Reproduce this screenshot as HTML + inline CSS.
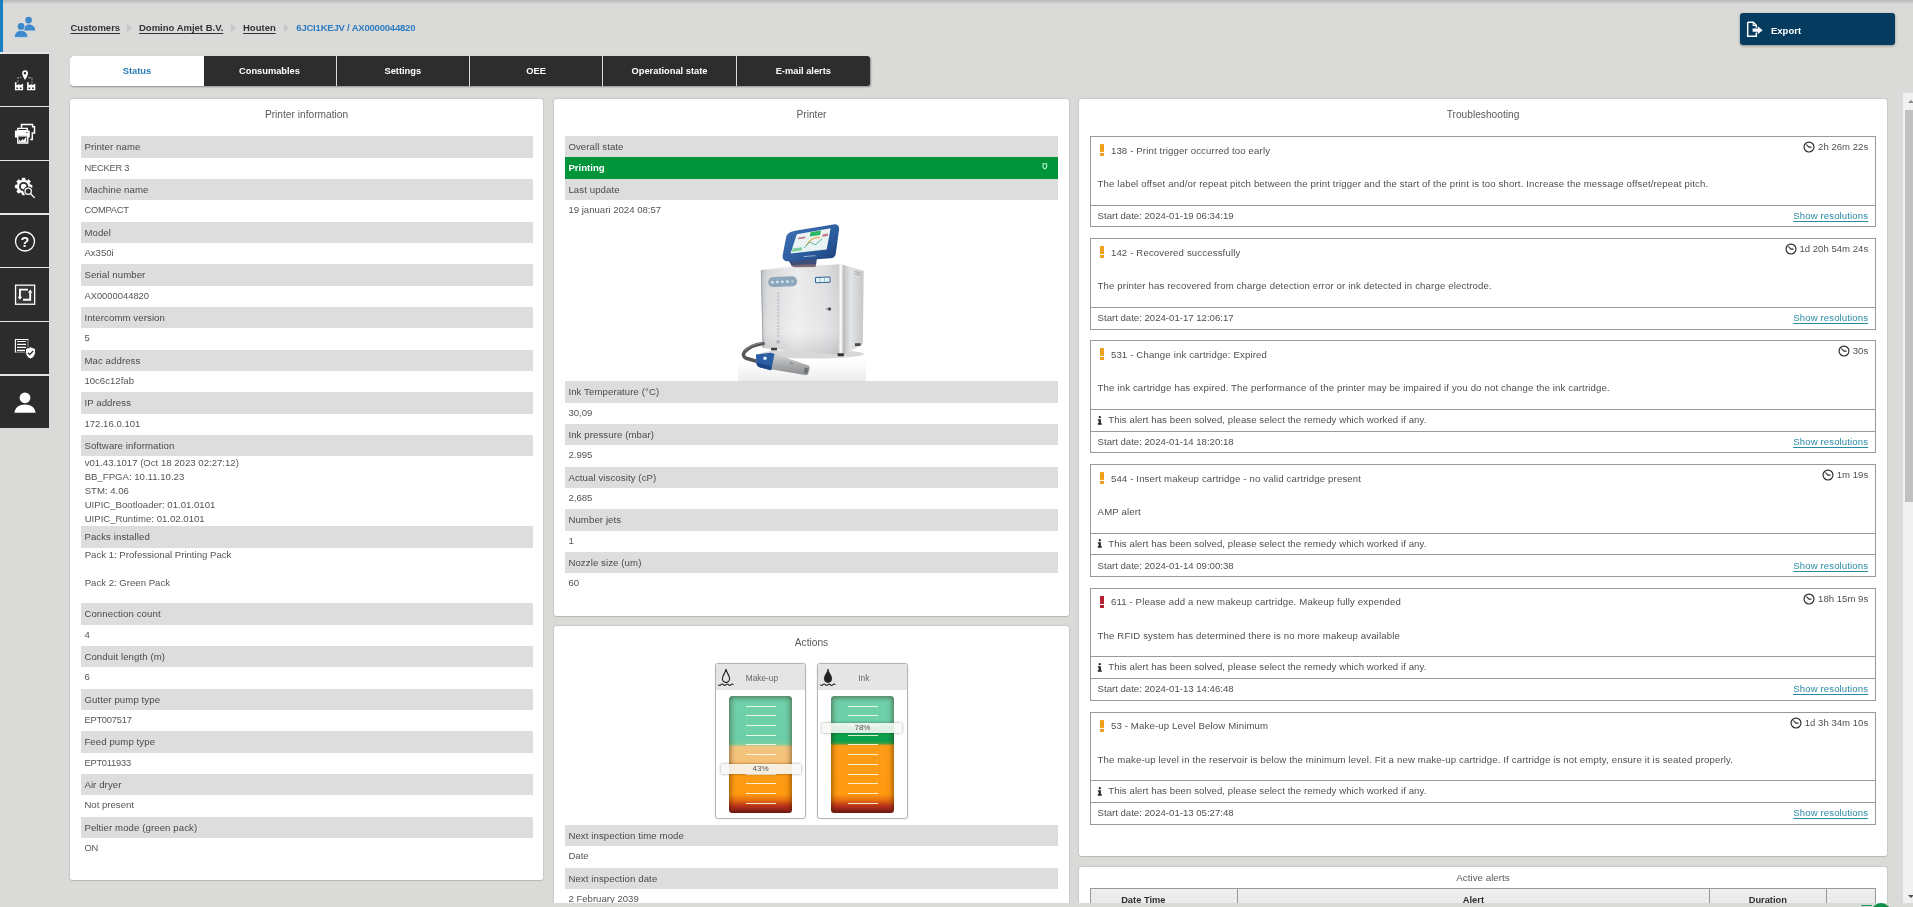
<!DOCTYPE html>
<html lang="en">
<head>
<meta charset="utf-8">
<title>Printer status</title>
<style>
*{box-sizing:border-box;margin:0;padding:0}
html,body{width:1913px;height:907px;overflow:hidden}
body{position:relative;background:#dadad8;font-family:"Liberation Sans",sans-serif;font-size:10px;color:#505050}
.abs{position:absolute}
#wrap{position:absolute;left:0;top:0;width:1913px;height:907px;overflow:hidden;will-change:transform}
#topstrip{left:0;top:0;width:1913px;height:4px;background:linear-gradient(#bcbcbc 0,#c2c2c2 40%,#dadad8 100%)}
/* sidebar */
#side{left:0;top:0;width:49px;height:428px;will-change:transform}
.sitem{position:absolute;left:0;width:49px;height:52.3px;background:#2c2c2c}
.sitem svg{position:absolute;left:0;top:0}
.sitem.act{background:transparent}
.sitem.act:before{content:"";position:absolute;left:0;top:0;width:3px;height:52px;background:#1b7fc4}
.ssep{position:absolute;left:0;width:49px;height:1.4px;background:#e6e6e6}
/* breadcrumb */
.bc{top:21px;height:14px;line-height:14px;font-weight:bold;font-size:9.5px;color:#333;white-space:nowrap}
.bc u{text-decoration:underline;text-underline-offset:1.5px}
.bc.cur{color:#2b7cc0}
.bcarr{top:24px;width:0;height:0;border-left:5px solid #c6c6c6;border-top:4px solid transparent;border-bottom:4px solid transparent}
/* export */
#export{left:1740px;top:13px;width:155px;height:32px;border-radius:3px;background:#043b5e;box-shadow:0 1px 3px rgba(0,0,0,.35);color:#fff;font-weight:bold;font-size:9.5px}
#export span{position:absolute;left:31px;top:10.8px;line-height:14px}
/* tabs */
#tabs{left:70px;top:56px;width:800px;height:30px;border-radius:3px;background:#2d2d2d;box-shadow:1px 1px 2px rgba(0,0,0,.35)}
.tab{position:absolute;top:0;height:30px;width:133.33px;line-height:30px;text-align:center;color:#fff;font-weight:bold;font-size:9.3px;border-right:1px solid #dadad8;white-space:nowrap}
.tab.on{background:#fff;color:#2b7cb8;border-radius:3px 0 0 3px;border-right:0;width:134px}
.tab.last{border-right:0}
/* panels */
.panel{position:absolute;background:#fff;border-radius:2.5px;box-shadow:0 0 2px rgba(0,0,0,.25),0 1px 1px rgba(0,0,0,.1)}
.ptitle{position:absolute;left:0;right:0;text-align:center;font-size:10.2px;color:#5a5a5a;line-height:14px;white-space:nowrap}
.row{position:absolute;height:21.33px;line-height:21.33px;padding-left:3.4px;white-space:nowrap;overflow:hidden}
.lab{background:#dddddd;color:#4a4a4a;font-size:9.6px;letter-spacing:.1px}
.val{color:#555;font-size:9.6px;line-height:20.2px}
.cap{font-size:9.3px;letter-spacing:-.2px}
.ml{position:absolute;line-height:14px;font-size:9.6px;padding-left:3.7px;white-space:nowrap;color:#555}

.card{position:absolute;top:37.3px;width:90.6px;height:156.2px;border:1px solid #b4b4b4;border-radius:3px;background:#fff;box-shadow:0 0 2px rgba(0,0,0,.12)}
.chead{position:absolute;left:0;top:0;right:0;height:26.1px;background:#e5e5e5;border-radius:2px 2px 0 0}
.chead span{position:absolute;left:0;right:0;top:6.5px;line-height:14px;text-align:center;font-size:8.3px;color:#666}
.tank{position:absolute;left:12.8px;top:31.7px;width:63px;height:117px;border-radius:3.5px;overflow:hidden;box-shadow:inset 0 0 5px rgba(0,0,0,.28)}
.tank i{position:absolute;left:17px;width:30px;height:1px;background:rgba(255,255,235,.85)}
.tshade{position:absolute;left:0;top:0;width:63px;height:117px;border-radius:3.5px;box-shadow:inset 0 0 6px 1px rgba(70,35,0,.42)}
.mark{position:absolute;left:4.3px;width:80px;height:10px;background:rgba(247,247,245,.9);box-shadow:0 0 3px rgba(0,0,0,.38);text-align:center;font-size:8px;line-height:10.5px;color:#555;border-radius:1px}

.abox{position:absolute;left:11.4px;width:785.4px;border:1px solid #999;background:#fff}
.abox .t{position:absolute;white-space:nowrap;line-height:14px;color:#505050;font-size:9.6px;letter-spacing:.15px}
.abox .dv{position:absolute;left:0;right:0;height:1px;background:#999}
.abox a{color:#2a8aa6;text-decoration:underline;text-underline-offset:1.5px}
.ex{position:absolute;left:8.6px;top:6.7px;width:4px;height:11.8px}
.ex:before{content:"";position:absolute;left:0;top:0;width:4px;height:8.3px}
.ex:after{content:"";position:absolute;left:.2px;bottom:0;width:3.6px;height:2.4px}
.ex.o:before,.ex.o:after{background:#f0a01e}
.ex.o:before{background:linear-gradient(#f5a623,#ee9a1c 60%,#f0a81e)}
.ex.r:before,.ex.r:after{background:#b3222e}
.thx{position:absolute;top:22.400px;font-weight:bold;font-size:9.300px;color:#2e2e2e;text-align:center;line-height:22px;white-space:nowrap}
.thd{position:absolute;top:0;height:30px;background:linear-gradient(#ececec,#e6e6e6);border:1px solid #999;border-left:0;font-weight:bold;font-size:9.3px;color:#2e2e2e;text-align:center;line-height:22px}
</style>
</head>
<body>
<div id="wrap">
<div id="topstrip" class="abs"></div>

<!-- SIDEBAR -->
<div id="side" class="abs">
<div class="sitem act" style="top:0.00px"><svg width="49" height="53" viewBox="0 0 49 53"><g fill="#3d89cd">
<circle cx="28.6" cy="20.1" r="3.35"/><path d="M24.2 30.6c0-3.6 1.9-6 4.4-6h.2c2.9 0 6.4 1.9 6.4 6z"/>
<circle cx="21.1" cy="26.4" r="3.9" fill="#dcdcda"/><circle cx="21.1" cy="26.4" r="3.45"/>
<path d="M14.4 37.4c0-4.6 2.9-7 6.7-7s6.7 2.4 6.7 7z" stroke="#dcdcda" stroke-width=".8"/></g></svg></div>
<div class="sitem" style="top:53.67px"><svg width="49" height="53" viewBox="0 0 49 53">
<path d="M17.900 28.600V23.500H21.500M28.400 23.600H32V29.400" fill="none" stroke="#8a8a8a" stroke-width="1.100" stroke-dasharray="2.600 1"/>
<g fill="#fff">
<path d="M25.100 16.300a2.900 2.900 0 0 0-2.900 2.900c0 2.300 2.900 6.800 2.900 6.800s2.900-4.500 2.900-6.800a2.900 2.900 0 0 0-2.900-2.900zm-.2 1.600a1.250 1.250 0 1 1 0 2.500 1.250 1.250 0 0 1 0-2.500z" fill-rule="evenodd"/>
<path d="M14.900 36.200V28.300h1.600v3l2.900-1.300v1.300l3.700-1.500v6.400zM16.400 33.400v1.700h1.700v-1.700zm3.500 0v1.700h1.700v-1.700z" fill-rule="evenodd"/>
<path d="M27.100 36.200V28.300h1.600v3l2.900-1.300v1.300l3.700-1.500v6.400zM28.600 33.400v1.700h1.700v-1.700zm3.500 0v1.700h1.700v-1.700z" fill-rule="evenodd"/>
</g></svg></div>
<div class="ssep" style="top:52.27px"></div>
<div class="sitem" style="top:107.33px"><svg width="49" height="53" viewBox="0 0 49 53">
<path d="M21.500 20.800V17.400H32.600V19.800H34.500V26H32.300V32.500H30.200" fill="none" stroke="#fff" stroke-width="1.500"/>
<g fill="#fff"><path d="M17.100 20.700h10.900v3.200H17.100zm1.300 1.300v1.100h8.200v-1.100z" fill-rule="evenodd"/>
<path d="M15.700 23.400h13.300a.8.800 0 0 1 .8.800v6.300h-2.300v-2H17.200v2h-2.300v-6.300a.8.800 0 0 1 .8-.8zm10.400 1.500v.8h1.500v-.8z" fill-rule="evenodd"/>
<path d="M17.100 28.300h11.300v8.500H17.100zm1.300 1.100v5.900h8.700v-5.900z" fill-rule="evenodd"/>
<path d="M18.800 32.300l2 2.200 1.500-2.600 1.200 1.400 2.800-3.600v5.600h-7.500z"/></g></svg></div>
<div class="ssep" style="top:105.93px"></div>
<div class="sitem" style="top:161.00px"><svg width="49" height="53" viewBox="0 0 49 53">
<path d="M29.99 23.87L31.99 24.15L31.99 26.85L29.99 27.13L29.28 28.87L30.49 30.48L28.58 32.39L26.97 31.18L25.23 31.89L24.95 33.89L22.25 33.89L21.97 31.89L20.23 31.18L18.62 32.39L16.71 30.48L17.92 28.87L17.21 27.13L15.21 26.85L15.21 24.15L17.21 23.87L17.92 22.13L16.71 20.52L18.62 18.61L20.23 19.82L21.97 19.11L22.25 17.11L24.95 17.11L25.23 19.11L26.97 19.82L28.58 18.61L30.49 20.52L29.28 22.13z" fill="#fff" stroke="#fff" stroke-width=".6" stroke-linejoin="round"/>
<circle cx="23.600" cy="25.500" r="3.700" fill="none" stroke="#2c2c2c" stroke-width="1.800"/>
<circle cx="28.200" cy="30.200" r="4.800" fill="#2c2c2c"/>
<circle cx="28.200" cy="30.200" r="3.150" fill="none" stroke="#fff" stroke-width="1.250"/>
<path d="M30.700 32.700l3.700 3.900" stroke="#fff" stroke-width="1.300" stroke-linecap="round"/></svg></div>
<div class="ssep" style="top:159.60px"></div>
<div class="sitem" style="top:214.67px"><svg width="49" height="53" viewBox="0 0 49 53">
<circle cx="25" cy="26.500" r="9.500" fill="none" stroke="#fff" stroke-width="1.300"/>
<text x="25" y="31.600" text-anchor="middle" font-family="Liberation Sans, sans-serif" font-weight="bold" font-size="14.500" fill="#fff">?</text></svg></div>
<div class="ssep" style="top:213.27px"></div>
<div class="sitem" style="top:268.34px"><svg width="49" height="53" viewBox="0 0 49 53">
<rect x="15.550" y="17.150" width="19.100" height="19.100" fill="#383838" stroke="#fff" stroke-width="1.300"/>
<path d="M28 21.600H19.950V29.200M23 31.800H30.200V24.200" fill="none" stroke="#fff" stroke-width="1.900"/>
<path d="M17.700 28.700h4.500l-2.250 3zM27.950 24.700h4.500l-2.250-3.100z" fill="#fff"/></svg></div>
<div class="ssep" style="top:266.94px"></div>
<div class="sitem" style="top:322.00px"><svg width="49" height="53" viewBox="0 0 49 53">
<path d="M28 17.500V30.100H15.400" fill="none" stroke="#8e8e8e" stroke-width="1.100"/>
<path d="M15.400 30.500V17.500H28.400" fill="none" stroke="#fff" stroke-width="1.100"/>
<path d="M17.100 19.500h9M17.100 22.400h9M17.100 25.400h9M17.100 28.300h8" stroke="#fff" stroke-width="1.200"/>
<path d="M30.500 24.800l5 1.900v3.500c0 3.200-2.100 5.600-5 6.900-2.900-1.300-5-3.700-5-6.900v-3.500z" fill="#fff" stroke="#2c2c2c" stroke-width="1"/>
<path d="M27.900 30.800l1.900 1.700 3.500-3.600" fill="none" stroke="#2c2c2c" stroke-width="1.300"/></svg></div>
<div class="ssep" style="top:320.60px"></div>
<div class="sitem" style="top:375.67px"><svg width="49" height="53" viewBox="0 0 49 53"><g fill="#fff">
<circle cx="25" cy="21.800" r="5.400"/><path d="M14.400 36.700c.6-5.400 5-8.300 10.600-8.300s10 2.900 10.600 8.300z"/></g></svg></div>
<div class="ssep" style="top:374.27px"></div>
</div>

<!-- BREADCRUMB -->
<div class="abs bc" style="left:70.5px"><u>Customers</u></div>
<div class="abs bcarr" style="left:127px"></div>
<div class="abs bc" style="left:139px"><u>Domino Amjet B.V.</u></div>
<div class="abs bcarr" style="left:231px"></div>
<div class="abs bc" style="left:243px"><u>Houten</u></div>
<div class="abs bcarr" style="left:284px"></div>
<div class="abs bc cur" style="left:296.3px;letter-spacing:-0.2px">6JCI1KEJV / AX0000044820</div>

<!-- EXPORT -->
<div id="export" class="abs">
<svg class="abs" style="left:6px;top:7.8px" width="19" height="18" viewBox="0 0 19 18">
<path d="M1.7 1.2h5.6l3 3v2.6M10.3 11.6v3.6H1.7V1.2" fill="none" stroke="#fff" stroke-width="1.5" stroke-linejoin="miter"/>
<path d="M7.2 1.4v3.1h3" fill="none" stroke="#fff" stroke-width="1.1"/>
<path d="M6.6 7.6h5.2V5.2L16.6 9.2l-4.8 4v-2.4H6.6z" fill="#fff"/>
</svg>
<span>Export</span></div>

<!-- TABS -->
<div id="tabs" class="abs">
<div class="tab on" style="left:0">Status</div>
<div class="tab" style="left:133.33px">Consumables</div>
<div class="tab" style="left:266.67px">Settings</div>
<div class="tab" style="left:400px">OEE</div>
<div class="tab" style="left:533.33px">Operational state</div>
<div class="tab last" style="left:666.67px">E-mail alerts</div>
</div>

<!-- LEFT PANEL -->
<div class="panel" style="left:70px;top:99px;width:473px;height:781px">
<div class="ptitle" style="top:8.5px">Printer information</div>
<div class="row lab" style="left:11px;top:37.33px;width:452px">Printer name</div>
<div class="row val" style="left:11px;top:58.66px;width:452px"><span class="cap">NECKER 3</span></div>
<div class="row lab" style="left:11px;top:80.00px;width:452px">Machine name</div>
<div class="row val" style="left:11px;top:101.33px;width:452px"><span class="cap">COMPACT</span></div>
<div class="row lab" style="left:11px;top:122.66px;width:452px">Model</div>
<div class="row val" style="left:11px;top:144.00px;width:452px">Ax350i</div>
<div class="row lab" style="left:11px;top:165.33px;width:452px">Serial number</div>
<div class="row val" style="left:11px;top:186.66px;width:452px"><span style="font-size:9.4px">AX0000044820</span></div>
<div class="row lab" style="left:11px;top:207.99px;width:452px">Intercomm version</div>
<div class="row val" style="left:11px;top:229.33px;width:452px">5</div>
<div class="row lab" style="left:11px;top:250.66px;width:452px">Mac address</div>
<div class="row val" style="left:11px;top:271.99px;width:452px">10c6c12fab</div>
<div class="row lab" style="left:11px;top:293.33px;width:452px">IP address</div>
<div class="row val" style="left:11px;top:314.66px;width:452px">172.16.0.101</div>
<div class="row lab" style="left:11px;top:335.99px;width:452px">Software information</div>
<div class="ml" style="left:11px;top:357.32px">v01.43.1017 (Oct 18 2023 02:27:12)<br>BB_FPGA: 10.11.10.23<br>STM: 4.06<br>UIPIC_Bootloader: 01.01.0101<br>UIPIC_Runtime: 01.02.0101</div>
<div class="row lab" style="left:11px;top:427.32px;width:452px">Packs installed</div>
<div class="ml" style="left:11px;top:448.66px">Pack 1: Professional Printing Pack<br><br>Pack 2: Green Pack</div>
<div class="row lab" style="left:11px;top:504.21px;width:452px">Connection count</div>
<div class="row val" style="left:11px;top:525.54px;width:452px">4</div>
<div class="row lab" style="left:11px;top:546.87px;width:452px">Conduit length (m)</div>
<div class="row val" style="left:11px;top:568.21px;width:452px">6</div>
<div class="row lab" style="left:11px;top:589.54px;width:452px">Gutter pump type</div>
<div class="row val" style="left:11px;top:610.87px;width:452px"><span class="cap">EPT007517</span></div>
<div class="row lab" style="left:11px;top:632.21px;width:452px">Feed pump type</div>
<div class="row val" style="left:11px;top:653.54px;width:452px"><span class="cap">EPT011933</span></div>
<div class="row lab" style="left:11px;top:674.87px;width:452px">Air dryer</div>
<div class="row val" style="left:11px;top:696.20px;width:452px">Not present</div>
<div class="row lab" style="left:11px;top:717.54px;width:452px">Peltier mode (green pack)</div>
<div class="row val" style="left:11px;top:738.87px;width:452px"><span class="cap">ON</span></div>
</div>

<!-- MID PANEL -->
<div class="panel" style="left:554px;top:99px;width:515px;height:517px">
<div class="ptitle" style="top:8.5px">Printer</div>
<div class="row lab" style="left:11px;top:37.33px;width:493px;">Overall state</div>
<div class="row val" style="left:11px;top:58.2px;width:493px;background:#00953b;color:#fff;font-weight:bold;font-size:9.6px;height:21.8px;line-height:21.4px">Printing</div>
<svg class="abs" style="left:488px;top:63.5px" width="6" height="7" viewBox="0 0 6 7"><path d="M1 .7h3.6v3.6L2.8 5.9 1 4.3z" fill="none" stroke="#b6f7cf" stroke-width="1.1"/></svg>
<div class="row lab" style="left:11px;top:80.00px;width:493px;">Last update</div>
<div class="row val" style="left:11px;top:101.33px;width:493px;">19 januari 2024 08:57</div>
<svg class="abs" style="left:166px;top:116px" width="180" height="166.300" viewBox="0 0 180 166.300">
<defs>
<linearGradient id="gFront" x1="0" x2="1" y1="0" y2="0"><stop offset="0" stop-color="#b9bcbf"/><stop offset=".08" stop-color="#d4d6d8"/><stop offset=".45" stop-color="#ebebec"/><stop offset=".8" stop-color="#dcdddf"/><stop offset="1" stop-color="#c9cbcd"/></linearGradient>
<linearGradient id="gFrontV" x1="0" x2="0" y1="0" y2="1"><stop offset="0" stop-color="#fff" stop-opacity="0"/><stop offset=".75" stop-color="#fff" stop-opacity=".25"/><stop offset="1" stop-color="#9a9a9a" stop-opacity=".25"/></linearGradient>
<linearGradient id="gSide" x1="0" x2="1" y1="0" y2="0"><stop offset="0" stop-color="#bfc1c3"/><stop offset=".35" stop-color="#e2e3e4"/><stop offset="1" stop-color="#c6c7c9"/></linearGradient>
<linearGradient id="gEdge" x1="0" x2="1" y1="0" y2="0"><stop offset="0" stop-color="#c4c5c7"/><stop offset=".45" stop-color="#ffffff"/><stop offset="1" stop-color="#a9abad"/></linearGradient>
<linearGradient id="gMon" x1="0" x2="1" y1="0" y2="1"><stop offset="0" stop-color="#3f72b4"/><stop offset=".6" stop-color="#2b5b9e"/><stop offset="1" stop-color="#1d3f78"/></linearGradient>
<linearGradient id="gHead" x1="0" x2="0" y1="0" y2="1"><stop offset="0" stop-color="#d9dadb"/><stop offset=".55" stop-color="#a9abad"/><stop offset="1" stop-color="#8b8d90"/></linearGradient>
<linearGradient id="gFloor" x1="0" x2="0" y1="0" y2="1"><stop offset="0" stop-color="#ffffff"/><stop offset="1" stop-color="#ebebeb"/></linearGradient>
<filter id="bl" x="-5%" y="-5%" width="110%" height="110%"><feGaussianBlur stdDeviation=".45"/></filter>
</defs>
<rect x="18" y="146" width="128" height="21" fill="url(#gFloor)"/>
<g filter="url(#bl)">
<!-- shadow under body -->
<ellipse cx="92" cy="139" rx="52" ry="4.500" fill="#b8b8b8" opacity=".55"/>
<!-- top face -->
<path d="M40.900 55 72 50.500 120.600 49.200 143.700 56 121 52.500z" fill="#f2f2f3"/>
<!-- side face -->
<path d="M123.500 50 143.700 56 142.800 129.300 124 139.500z" fill="url(#gSide)"/>
<path d="M134.500 56.300l6 1.600M134.500 58.600l6 1.600" stroke="#9c9ea0" stroke-width=".800"/>
<!-- front face -->
<path d="M40.900 55 120.600 49.200 121.500 139.900 42.800 133.100z" fill="url(#gFront)"/>
<path d="M40.900 55 120.600 49.200 121.500 139.900 42.800 133.100z" fill="url(#gFrontV)"/>
<path d="M41.300 55.500 43.100 132.800" stroke="#a3a5a8" stroke-width="1"/>
<!-- vertical edge -->
<path d="M117.800 49.400 124 50.100 124.400 139.600 118.600 139.700z" fill="url(#gEdge)"/>
<!-- control oval -->
<rect x="48.200" y="61.700" width="29" height="10" rx="5" fill="#8ea7bb" transform="rotate(-2 62 67)"/>
<g fill="#d6f0ff"><circle cx="52.400" cy="67.200" r="1.300"/><circle cx="57.400" cy="67" r="1.300"/><circle cx="62.400" cy="66.800" r="1.300"/><circle cx="67.400" cy="66.600" r="1.300"/><circle cx="72.300" cy="66.400" r="1.100" fill="#c5d3dd"/></g>
<!-- small display -->
<rect x="95.500" y="62.200" width="14.500" height="5.400" rx=".800" fill="#dff3f5" stroke="#35608f" stroke-width="1" transform="rotate(-2 102 65)"/>
<path d="M100 63.300v3.400M104.500 63.100v3.400" stroke="#7fb3c8" stroke-width=".800"/>
<!-- logo faint -->
<path d="M58.200 77v46" stroke="#c3c5c8" stroke-width="2.600" stroke-dasharray="2.200 1.100" opacity=".8"/>
<path d="M58.200 124.500l2.400 2.400-2.400 2.400-2.400-2.400z" fill="#b4b7bb"/>
<!-- key -->
<circle cx="109.500" cy="94" r="1.700" fill="#4a4c50"/><path d="M106 94h3" stroke="#6a6c70" stroke-width="1"/>
<!-- feet -->
<rect x="51" y="132.800" width="6" height="2.600" fill="#3c3c3e"/><rect x="117.600" y="138.300" width="6.300" height="3" rx=".800" fill="#303032"/><rect x="135" y="128.200" width="5.600" height="2.800" fill="#4a4a4c"/>
<!-- monitor stand -->
<path d="M68 44.500 97 42.500 96 50.500 72 51.500z" fill="#3b4f7a"/>
<path d="M72 50 96 49.300 95.500 52 74 52.200z" fill="#7d6a74"/>
<!-- monitor -->
<path d="M76.500 15.600 113.500 9.400c3.600-.6 6 1.500 5.600 5l-3.300 24c-.5 3.200-2.300 4.600-5.400 4.900L69 46.300c-4.500.4-7-2-6.300-6l3.300-17.600c.8-4.200 4.600-6.200 10.500-7.100z" fill="url(#gMon)"/>
<path d="M76.800 19.200 110.600 13.300 106.700 34.600 70.500 38.400z" fill="#eaf2f4"/>
<path d="M90.500 17.200 101 15.500 100.200 20 89.800 21.400z" fill="#2fb866"/>
<path d="M72.500 33.400 82 32.300 81.600 35.600 72 36.700z" fill="#7fd0a0"/>
<path d="M86 30.500c4-6 9-8.500 14-8" fill="none" stroke="#e0b05c" stroke-width="1.300"/>
<path d="M84 33l6-6 5 3 7-6" fill="none" stroke="#58b7a7" stroke-width="1"/>
<path d="M102.500 19.500l5.500-.9-.4 2.300-5.500.8zM78.500 22.500l7-1-.3 1.800-7 1z" fill="#b95a68" opacity=".8"/>
<path d="M83.500 41.600l12-.9" stroke="#9fb6d6" stroke-width=".900"/>
<!-- cable -->
<path d="M43 128.500c-7 1-14.500 3.500-18.500 8.500-2.200 3-1 5.200 2.500 6.600l9.500 2.600" fill="none" stroke="#55575a" stroke-width="3.600" stroke-linecap="round"/>
<path d="M43 127.600c-7 1-14 3.300-18 8" fill="none" stroke="#8e9093" stroke-width="1"/>
<!-- print head -->
<path d="M36 139.500 50.800 137.800 88 150.200c1.600.6 2 1.800 1.600 3.500l-1.300 4.600c-.5 1.600-1.700 2.100-3.300 1.700L40.500 152.600c-2.800-.8-4.300-2.700-4.300-5.500z" fill="url(#gHead)"/>
<path d="M36 139.500 50.800 137.800 54.500 139l-3.300 16.200-10.700-2.600c-2.800-.8-4.300-2.700-4.300-5.500z" fill="#2a5da3"/>
<path d="M36.500 147.500 51.400 151.500 51 155.200 40.500 152.600c-2.400-.7-3.900-2.300-4-5.100z" fill="#1d4584"/>
<circle cx="45" cy="143.300" r="1.800" fill="#dfe8f3"/>
<path d="M85 152.500l3.600 1.200-1.300 4.700-3.400-.9z" fill="#6d6f72"/>
<path d="M70 147.700l3 1" stroke="#77797c" stroke-width="1.200"/>
</g>
</svg>
<div class="row lab" style="left:11px;top:282.20px;width:493px;">Ink Temperature (°C)</div>
<div class="row val" style="left:11px;top:303.53px;width:493px;">30,09</div>
<div class="row lab" style="left:11px;top:324.87px;width:493px;">Ink pressure (mbar)</div>
<div class="row val" style="left:11px;top:346.20px;width:493px;">2.995</div>
<div class="row lab" style="left:11px;top:367.53px;width:493px;">Actual viscosity (cP)</div>
<div class="row val" style="left:11px;top:388.86px;width:493px;">2,685</div>
<div class="row lab" style="left:11px;top:410.20px;width:493px;">Number jets</div>
<div class="row val" style="left:11px;top:431.53px;width:493px;">1</div>
<div class="row lab" style="left:11px;top:452.86px;width:493px;">Nozzle size (um)</div>
<div class="row val" style="left:11px;top:474.20px;width:493px;">60</div>
</div>

<!-- ACTIONS PANEL -->
<div class="panel" style="left:554px;top:626px;width:515px;height:300px">
<div class="ptitle" style="top:9.6px">Actions</div>
<div class="card" style="left:161.3px"><div class="chead"><svg class="abs" style="left:.6px;top:4px" width="18" height="20" viewBox="0 0 18 20"><path d="M9 1C8.700 4.700 5.400 7.300 5.400 10.700a3.600 3.600 0 0 0 7.200 0C12.600 7.300 9.300 4.700 9 1z" fill="none" stroke="#222" stroke-width="1.150"/><path d="M1.400 16.700q1.250 1.500 2.500 0t2.500 0 2.500 0 2.500 0 2.500 0 2.500 0" fill="none" stroke="#222" stroke-width="1.050"/></svg><span style="padding-left:2.6px">Make-up</span></div><div class="tank" style="background:linear-gradient(#6fd0aa 0,#6ccfa8 38%,#7acf9f 41%,#f3c57f 43.5%,#f6c177 57%,#ff9c18 59%,#ff9910 84%,#e8700f 89%,#b8321a 94%,#8a1a1c 100%)"><i style="top:9.6px"></i><i style="top:19.3px"></i><i style="top:29.0px"></i><i style="top:38.8px"></i><i style="top:48.5px"></i><i style="top:58.2px"></i><i style="top:67.9px"></i><i style="top:77.6px"></i><i style="top:87.4px"></i><i style="top:97.1px"></i><i style="top:106.8px"></i><div class="tshade"></div></div><div class="mark" style="top:99.6px">43%</div></div>
<div class="card" style="left:263.2px"><div class="chead"><svg class="abs" style="left:.6px;top:4px" width="18" height="20" viewBox="0 0 18 20"><path d="M9 1C8.700 4.700 5.300 7.300 5.300 10.700a3.700 3.700 0 0 0 7.400 0C12.700 7.300 9.300 4.700 9 1z" fill="#222" stroke="#222" stroke-width=".800"/><path d="M1.400 16.700q1.250 1.500 2.500 0t2.500 0 2.500 0 2.500 0 2.500 0 2.500 0" fill="none" stroke="#222" stroke-width="1.050"/></svg><span style="padding-left:2.6px">Ink</span></div><div class="tank" style="background:linear-gradient(#6fd0aa 0,#6ccfa8 25%,#12a552 27%,#0aa04d 38%,#3aa040 40.5%,#ff9c18 42.5%,#ff9910 84%,#e8700f 89%,#b8321a 94%,#8a1a1c 100%)"><i style="top:9.6px"></i><i style="top:19.3px"></i><i style="top:29.0px"></i><i style="top:38.8px"></i><i style="top:48.5px"></i><i style="top:58.2px"></i><i style="top:67.9px"></i><i style="top:77.6px"></i><i style="top:87.4px"></i><i style="top:97.1px"></i><i style="top:106.8px"></i><div class="tshade"></div></div><div class="mark" style="top:59px">78%</div></div>
<div class="row lab" style="left:11px;top:199.00px;width:493px">Next inspection time mode</div>
<div class="row val" style="left:11px;top:220.30px;width:493px">Date</div>
<div class="row lab" style="left:11px;top:241.60px;width:493px">Next inspection date</div>
<div class="row val" style="left:11px;top:263.00px;width:493px">2 February 2039</div>
</div>

<!-- RIGHT PANEL -->
<div class="panel" style="left:1079px;top:99px;width:808px;height:756.6px">
<div class="ptitle" style="top:9px">Troubleshooting</div>
<div class="abox" style="top:37.33px;height:91px"><div class="ex o"></div><div class="t" style="left:19.5px;top:6.4px">138 - Print trigger occurred too early</div><div class="t" style="right:6.6px;top:2.3px;letter-spacing:0"><svg width="12" height="12" viewBox="0 0 12 12" style="position:absolute;left:-14.8px;top:1.4px"><circle cx="6" cy="6" r="4.95" fill="none" stroke="#2a2a2a" stroke-width="1.15"/><path d="M3.4 3.6 6 6.1h2.5" fill="none" stroke="#2a2a2a" stroke-width="1.05"/></svg>2h 26m 22s</div><div class="t" style="left:6.2px;top:39.5px">The label offset and/or repeat pitch between the print trigger and the start of the print is too short. Increase the message offset/repeat pitch.</div><div class="dv" style="top:68px"></div><div class="t" style="left:6.2px;top:71.5px;letter-spacing:0">Start date: 2024-01-19 06:34:19</div><div class="t" style="right:6.6px;top:71.5px;letter-spacing:.12px"><a>Show resolutions</a></div></div>
<div class="abox" style="top:139.33px;height:92px"><div class="ex o"></div><div class="t" style="left:19.5px;top:6.4px">142 - Recovered successfully</div><div class="t" style="right:6.6px;top:2.3px;letter-spacing:0"><svg width="12" height="12" viewBox="0 0 12 12" style="position:absolute;left:-14.8px;top:1.4px"><circle cx="6" cy="6" r="4.95" fill="none" stroke="#2a2a2a" stroke-width="1.15"/><path d="M3.4 3.6 6 6.1h2.5" fill="none" stroke="#2a2a2a" stroke-width="1.05"/></svg>1d 20h 54m 24s</div><div class="t" style="left:6.2px;top:39.5px">The printer has recovered from charge detection error or ink detected in charge electrode.</div><div class="dv" style="top:68px"></div><div class="t" style="left:6.2px;top:71.5px;letter-spacing:0">Start date: 2024-01-17 12:06:17</div><div class="t" style="right:6.6px;top:71.5px;letter-spacing:.12px"><a>Show resolutions</a></div></div>
<div class="abox" style="top:241.33px;height:113px"><div class="ex o"></div><div class="t" style="left:19.5px;top:6.4px">531 - Change ink cartridge: Expired</div><div class="t" style="right:6.6px;top:2.3px;letter-spacing:0"><svg width="12" height="12" viewBox="0 0 12 12" style="position:absolute;left:-14.8px;top:1.4px"><circle cx="6" cy="6" r="4.95" fill="none" stroke="#2a2a2a" stroke-width="1.15"/><path d="M3.4 3.6 6 6.1h2.5" fill="none" stroke="#2a2a2a" stroke-width="1.05"/></svg>30s</div><div class="t" style="left:6.2px;top:39.5px">The ink cartridge has expired. The performance of the printer may be impaired if you do not change the ink cartridge.</div><div class="dv" style="top:68px"></div><svg width="5.500" height="9.200" viewBox="0 0 6 10" style="position:absolute;left:5.600px;top:74.400px"><circle cx="3" cy="1.3" r="1.25" fill="#222"/><path d="M.9 3.4h3.3v4.6h1v1.5H.8V8h1V4.9H.9z" fill="#222"/></svg><div class="t" style="left:16.9px;top:71.8px;letter-spacing:.08px">This alert has been solved, please select the remedy which worked if any.</div><div class="dv" style="top:90px"></div><div class="t" style="left:6.2px;top:93.7px;letter-spacing:0">Start date: 2024-01-14 18:20:18</div><div class="t" style="right:6.6px;top:93.7px;letter-spacing:.12px"><a>Show resolutions</a></div></div>
<div class="abox" style="top:365.33px;height:113px"><div class="ex o"></div><div class="t" style="left:19.5px;top:6.4px">544 - Insert makeup cartridge - no valid cartridge present</div><div class="t" style="right:6.6px;top:2.3px;letter-spacing:0"><svg width="12" height="12" viewBox="0 0 12 12" style="position:absolute;left:-14.8px;top:1.4px"><circle cx="6" cy="6" r="4.95" fill="none" stroke="#2a2a2a" stroke-width="1.15"/><path d="M3.4 3.6 6 6.1h2.5" fill="none" stroke="#2a2a2a" stroke-width="1.05"/></svg>1m 19s</div><div class="t" style="left:6.2px;top:39.5px">AMP alert</div><div class="dv" style="top:68px"></div><svg width="5.500" height="9.200" viewBox="0 0 6 10" style="position:absolute;left:5.600px;top:73.900px"><circle cx="3" cy="1.3" r="1.25" fill="#222"/><path d="M.9 3.4h3.3v4.6h1v1.5H.8V8h1V4.9H.9z" fill="#222"/></svg><div class="t" style="left:16.9px;top:71.3px;letter-spacing:.08px">This alert has been solved, please select the remedy which worked if any.</div><div class="dv" style="top:89px"></div><div class="t" style="left:6.2px;top:93.2px;letter-spacing:0">Start date: 2024-01-14 09:00:38</div><div class="t" style="right:6.6px;top:93.2px;letter-spacing:.12px"><a>Show resolutions</a></div></div>
<div class="abox" style="top:489.33px;height:113px"><div class="ex r"></div><div class="t" style="left:19.5px;top:5.8px">611 - Please add a new makeup cartridge. Makeup fully expended</div><div class="t" style="right:6.6px;top:2.3px;letter-spacing:0"><svg width="12" height="12" viewBox="0 0 12 12" style="position:absolute;left:-14.8px;top:1.4px"><circle cx="6" cy="6" r="4.95" fill="none" stroke="#2a2a2a" stroke-width="1.15"/><path d="M3.4 3.6 6 6.1h2.5" fill="none" stroke="#2a2a2a" stroke-width="1.05"/></svg>18h 15m 9s</div><div class="t" style="left:6.2px;top:39.5px">The RFID system has determined there is no more makeup available</div><div class="dv" style="top:67px"></div><svg width="5.500" height="9.200" viewBox="0 0 6 10" style="position:absolute;left:5.600px;top:73.400px"><circle cx="3" cy="1.3" r="1.25" fill="#222"/><path d="M.9 3.4h3.3v4.6h1v1.5H.8V8h1V4.9H.9z" fill="#222"/></svg><div class="t" style="left:16.9px;top:70.8px;letter-spacing:.08px">This alert has been solved, please select the remedy which worked if any.</div><div class="dv" style="top:89px"></div><div class="t" style="left:6.2px;top:92.8px;letter-spacing:0">Start date: 2024-01-13 14:46:48</div><div class="t" style="right:6.6px;top:92.8px;letter-spacing:.12px"><a>Show resolutions</a></div></div>
<div class="abox" style="top:613.33px;height:113px"><div class="ex o"></div><div class="t" style="left:19.5px;top:5.8px">53 - Make-up Level Below Minimum</div><div class="t" style="right:6.6px;top:2.3px;letter-spacing:0"><svg width="12" height="12" viewBox="0 0 12 12" style="position:absolute;left:-14.8px;top:1.4px"><circle cx="6" cy="6" r="4.95" fill="none" stroke="#2a2a2a" stroke-width="1.15"/><path d="M3.4 3.6 6 6.1h2.5" fill="none" stroke="#2a2a2a" stroke-width="1.05"/></svg>1d 3h 34m 10s</div><div class="t" style="left:6.2px;top:39.5px">The make-up level in the reservoir is below the minimum level. Fit a new make-up cartridge. If cartridge is not empty, ensure it is seated properly.</div><div class="dv" style="top:67px"></div><svg width="5.500" height="9.200" viewBox="0 0 6 10" style="position:absolute;left:5.600px;top:73.400px"><circle cx="3" cy="1.3" r="1.25" fill="#222"/><path d="M.9 3.4h3.3v4.6h1v1.5H.8V8h1V4.9H.9z" fill="#222"/></svg><div class="t" style="left:16.9px;top:70.8px;letter-spacing:.08px">This alert has been solved, please select the remedy which worked if any.</div><div class="dv" style="top:89px"></div><div class="t" style="left:6.2px;top:92.8px;letter-spacing:0">Start date: 2024-01-13 05:27:48</div><div class="t" style="right:6.6px;top:92.8px;letter-spacing:.12px"><a>Show resolutions</a></div></div>
</div>

<!-- ACTIVE ALERTS -->
<div class="panel" style="left:1079px;top:867px;width:808px;height:120px">
<div class="ptitle" style="top:3.8px;font-size:9.8px">Active alerts</div>
<div class="abs" style="left:11.3px;top:21.400px;width:785.300px;height:30px;background:linear-gradient(#eeeeee,#e6e6e6);border:1px solid #999"></div>
<div class="abs" style="left:158px;top:21.400px;width:1px;height:30px;background:#999"></div>
<div class="abs" style="left:630px;top:21.400px;width:1px;height:30px;background:#999"></div>
<div class="abs" style="left:747px;top:21.400px;width:1px;height:30px;background:#999"></div>
<div class="thx" style="left:11.3px;width:106px">Date Time</div>
<div class="thx" style="left:158.5px;width:471.800px">Alert</div>
<div class="thx" style="left:630.3px;width:117px">Duration</div>
</div>

<!-- BOTTOM / SCROLLBAR -->
<div class="abs" style="left:0;top:903.4px;width:1913px;height:4px;background:#dadad8"></div>
<div class="abs" style="left:1858px;top:903px;width:32px;height:32px">
<div class="abs" style="left:3px;top:1.6px;width:10.5px;height:1.6px;background:#169c52;border-radius:1px"></div>
<div class="abs" style="left:13px;top:-.5px;width:20px;height:20px;border-radius:50%;background:#0d8f46"></div></div>

<div class="abs" id="sbtrack" style="left:1903px;top:93px;width:10px;height:810.4px;background:#f1f1f1"></div>
<div class="abs" style="left:1905px;top:110px;width:8px;height:392px;background:#c1c1c1"></div>
<div class="abs" style="left:1907.8px;top:100.3px;width:0;height:0;border-left:3.4px solid transparent;border-right:3.4px solid transparent;border-bottom:3.6px solid #8a8a8a"></div>
<div class="abs" style="left:1907.8px;top:895.3px;width:0;height:0;border-left:3.4px solid transparent;border-right:3.4px solid transparent;border-top:3.6px solid #505050"></div>
</div>
</body>
</html>
